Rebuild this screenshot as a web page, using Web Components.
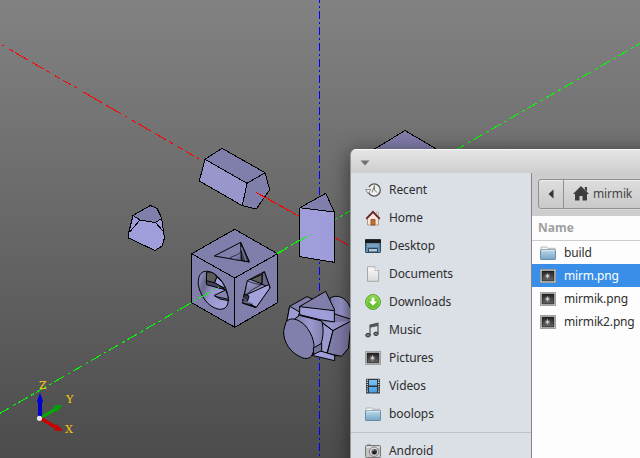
<!DOCTYPE html>
<html lang="en"><head><meta charset="utf-8"><title>CAD view</title>
<style>html,body{margin:0;width:640px;height:458px;overflow:hidden}</style></head>
<body>
<cad-workspace>
<model-view></model-view>
<file-dialog slot="dialog">
<place-item slot="places" icon="recent">Recent</place-item>
<place-item slot="places" icon="home">Home</place-item>
<place-item slot="places" icon="desktop">Desktop</place-item>
<place-item slot="places" icon="document">Documents</place-item>
<place-item slot="places" icon="download">Downloads</place-item>
<place-item slot="places" icon="music">Music</place-item>
<place-item slot="places" icon="picture">Pictures</place-item>
<place-item slot="places" icon="video">Videos</place-item>
<place-item slot="places" icon="folder">boolops</place-item>
<place-item slot="places" icon="device" separated>Android</place-item>
<path-bar slot="path">mirmik</path-bar>
<file-row icon="folder">build</file-row>
<file-row icon="picture" selected>mirm.png</file-row>
<file-row icon="picture">mirmik.png</file-row>
<file-row icon="picture">mirmik2.png</file-row>
</file-dialog>
</cad-workspace>
<script>
const define=(name,html,setup)=>customElements.define(name,class extends HTMLElement{
  static observedAttributes=['name','icon'];
  constructor(){super();this.attachShadow({mode:'open'}).innerHTML=html;}
  connectedCallback(){if(setup)setup(this,this.shadowRoot);}
  attributeChangedCallback(){if(this.isConnected&&setup)setup(this,this.shadowRoot);}
});

const icons={
recent:'<circle cx="9.2" cy="8" r="6.1" fill="#f0f0ed" stroke="#555" stroke-width="1.3"/><path d="M3.5 4.5A6.5 6.5 0 0 0 3.4 11" fill="none" stroke="#dededc" stroke-width="2.6"/><path d="M.5 7.5L3 11.3L6 7.5Z" fill="#f5f5f5" stroke="#777" stroke-width=".8"/><path d="M9.5 3.6L7 10.5M9.5 3.6V8L12 10.5" fill="none" stroke="#777" stroke-width="1"/>',
home:'<path d="M11.5 2H13.5V6H11.5Z" fill="#e8e0dc" stroke="#a79a96" stroke-width=".6"/><path d="M2.5 8L8 2.5L13.5 8V15H2.5Z" fill="#f4e6dc" stroke="#a89184" stroke-width=".9"/><path d="M1.2 8.8L8 1.8L14.8 8.8" fill="none" stroke="#6b2424" stroke-width="1.9"/><path d="M6 15V9.5H10V15Z" fill="#c9722b" stroke="#81441d" stroke-width=".8"/>',
desktop:'<rect x=".5" y="1.5" width="15" height="13" rx=".6" fill="url(#b)" stroke="#2c485c"/><path d="M0 1.5H16V5H0Z" fill="#17191b"/><path d="M2 5.5H14V9H2Z" fill="#8fb1cc" opacity=".65"/><path d="M3.5 10.5H12.5V14H3.5Z" fill="#b4c9d7" stroke="#27475f" stroke-width="1"/>',
document:'<path d="M2.5.8H10L13.6 4.5V15.3H2.5Z" fill="url(#w)" stroke="#a0a0a0" stroke-width=".9"/><path d="M10 1V4.5H13.5" fill="#fff" stroke="#aaa" stroke-width=".8"/>',
download:'<circle cx="8" cy="8" r="7.4" fill="url(#g)" stroke="#499c1d"/><circle cx="8" cy="8" r="6.4" fill="none" stroke="#a6e374" stroke-width=".7"/><path d="M6.6 3.8H9.4V7.4H12L8 11.8L4 7.4H6.6Z" fill="#fff"/>',
music:'<path d="M5 13V3.2L13 1.2V11.5" fill="none" stroke="#444" stroke-width="1.1"/><path d="M5 2.8L13 1V4L5 5.8Z" fill="#555"/><ellipse cx="3" cy="13.2" rx="2.3" ry="1.8" fill="#777" stroke="#333" stroke-width="1"/><ellipse cx="11" cy="11.8" rx="2.2" ry="1.7" fill="#777" stroke="#333" stroke-width="1"/>',
picture:'<rect x=".5" y="1.5" width="15" height="13" fill="#eee" stroke="#a0a0a0"/><rect x="2" y="3" width="12" height="10" fill="url(#k)" stroke="#171717" stroke-width=".7"/><path d="M7.5 5V11M4.8 8H10.2M5.5 6L9.5 10M9.5 6L5.5 10" stroke="#bbb" stroke-width=".7"/><circle cx="7.5" cy="8" r="1.2" fill="#ddd"/>',
video:'<rect x="1" y=".8" width="14" height="14.7" fill="#303436"/><path d="M4 2H12V7.5H4ZM4 9H12V14.5H4Z" fill="url(#v)"/><path d="M2.3 1.6V15M13.7 1.6V15" stroke="#eee" stroke-width="1.2" stroke-dasharray="1.1 1.1"/>',
folder:'<path d="M1 3.5V2H6.5L8 3.3H15V7H1Z" fill="#f7f7f5" stroke="#a5a6a4" stroke-width=".8"/><rect x=".5" y="4.8" width="15" height="9.7" rx=".6" fill="url(#f)" stroke="#567c96" stroke-width=".8"/><path d="M1.3 5.6H14.7" stroke="#d8eaf5"/>',
device:'<rect x=".5" y="2.5" width="15" height="12" rx="1" fill="#c4c5c3" stroke="#777"/><path d="M2 1.5H6V3H2Z" fill="#777"/><path d="M1.5 4.2H14.5" stroke="#eee"/><circle cx="9" cy="8.7" r="4.7" fill="#ddd" stroke="#777" stroke-width=".9"/><circle cx="9.3" cy="8.8" r="2.9" fill="#4a4859"/><circle cx="9.3" cy="9.4" r="1.5" fill="#1a1720"/><path d="M7.5 7.5L9 6.7" stroke="#bbb"/>',
path:'<path d="M8 0L16 8H14V14.5H9.5V10H6.5V14.5H2V8H0L8 0ZM11.8 1H14V5.5L11.8 3.3Z" fill="#3d3d3d"/>'
};
const lg=(id,a,b)=>`<linearGradient id="${id}" x2="0" y2="1"><stop stop-color="${a}"/><stop offset="1" stop-color="${b}"/></linearGradient>`;
define('ui-icon','<style>:host{display:block;width:16px;height:16px;flex:none}svg{display:block}</style><span></span>',(h,r)=>{
 r.querySelector('span').innerHTML=`<svg width="16" height="16" viewBox="0 0 16 16"><defs>${lg('b','#3e6786','#6d9abb')+lg('w','#fafafa','#dadada')+lg('g','#8ed44c','#59b523')+lg('k','#222','#666')+lg('v','#7cc3f7','#459ce8')+lg('f','#bcd8ea','#75a5c7')}</defs>${icons[h.getAttribute('name')]||''}</svg>`;
});
define('place-item',`<style>:host{display:flex;align-items:center;height:28px;padding-left:14px;gap:8px;font:12px/28px "Noto Sans",sans-serif;letter-spacing:-.08px;color:#2e2e2e;box-sizing:border-box}
:host([separated]){border-top:1px solid #bfc2c6;height:37px;margin-top:4px}</style><ui-icon></ui-icon><span><slot></slot></span>`,(h,r)=>r.querySelector('ui-icon').setAttribute('name',h.getAttribute('icon')));
define('file-row',`<style>:host{display:flex;align-items:center;height:23px;padding-left:8px;gap:8px;font:12px/23px "Noto Sans",sans-serif;letter-spacing:-.15px;color:#2e2e2e}
:host([selected]){background:#398ee7;color:#fff}</style><ui-icon></ui-icon><span><slot></slot></span>`,(h,r)=>r.querySelector('ui-icon').setAttribute('name',h.getAttribute('icon')));
define('path-bar',`<style>:host{display:flex;box-sizing:border-box;width:150px;height:30px;border:1px solid #909090;border-radius:3px;background:linear-gradient(#dedede,#c9c9c9);font:12px/28px "Noto Sans",sans-serif;letter-spacing:-.15px;color:#454545;box-shadow:inset 0 1px #ececec,0 1px #dadada}
.back{width:25px;border-right:1px solid #909090;display:grid;place-items:center;box-sizing:border-box}.here{display:flex;align-items:center;padding-left:9px;gap:4px}</style>
<div class="back"><svg width="6" height="10"><path d="M5.5 .5V9.5L.5 5Z" fill="#353535"/></svg></div><div class="here"><ui-icon name="path"></ui-icon><span><slot></slot></span></div>`);
define('file-dialog',`<style>:host{display:grid;grid-template-rows:24px 1fr;width:320px;height:340px;overflow:hidden;border-radius:6px 0 0 0;box-sizing:border-box;border-left:1px solid #979797;background:#cdcdcd}
.title{background:linear-gradient(#e5e5e5,#cecece);border-top:1px solid #f8f8f8;box-sizing:border-box;padding:10px 0 0 9px}.title svg{display:block}
.body{display:grid;grid-template-columns:180px 1fr;min-height:0}.places{background:#dbdfe6;padding-top:3px}
.files{border-left:1px solid #858585;background:#fdfdfd}.bar{height:43px;background:#cdcdcd;padding:6px 0 0 6px;box-sizing:border-box}
.head{height:25px;box-sizing:border-box;border-bottom:1px solid #ccc;padding-left:6px;font:bold 12px/24px "Noto Sans",sans-serif;color:#a0a0a0}</style>
<div class="title"><svg width="10" height="6"><path d="M.5 .5H9.5L5 5.5Z" fill="#727272"/></svg></div><div class="body"><div class="places"><slot name="places"></slot></div><div class="files"><div class="bar"><slot name="path"></slot></div><div class="head">Name</div><slot></slot></div></div>`);
define('cad-workspace',`<style>:host{display:block;position:relative;width:640px;height:458px;overflow:hidden}
.win{position:absolute;left:350px;top:149px;border-radius:6px 0 0 0;box-shadow:0 3px 20px rgba(0,0,0,.5)}</style><slot></slot><div class="win"><slot name="dialog"></slot></div>`);
define('model-view',`<style>:host{display:block;width:640px;height:458px;background:linear-gradient(#828282,#4c4c4c)}svg{display:block}text{font:11.4px "DejaVu Serif",serif;fill:#ffc80a}</style>
<svg width="640" height="458" viewBox="0 0 640 458">
<defs>
<linearGradient id="cyl"><stop stop-color="#7c7aa5"/><stop offset=".55" stop-color="#9b99d0"/><stop offset="1" stop-color="#8280ac"/></linearGradient>
<linearGradient id="bore" x2="1" y2=".5"><stop stop-color="#a3a1da"/><stop offset=".3" stop-color="#69678b"/><stop offset=".55" stop-color="#9694c8"/><stop offset="1" stop-color="#a5a3dc"/></linearGradient>
<linearGradient id="ball" x2=".6" y2="1"><stop stop-color="#a3a1da"/><stop offset="1" stop-color="#6a688e"/></linearGradient>
</defs>
<g shape-rendering="crispEdges" fill="none" stroke-width="1">
<path d="M319.5 0V3M319.5 6V8" stroke="#00f"/><path d="M319.5 11V458" stroke="#00f" stroke-dasharray="8 3 2 3"/>
<path d="M2 45L348 245" stroke="red" stroke-dasharray="2 6 5 2 15 5 13 3 4 6 6 4 9 3 3 7 22 5 18 4"/>
<path d="M0 413.3L640 43.5" stroke="#0f0" stroke-dasharray="11 4 3 3"/>
</g>
<g fill="#807eaa" stroke="#000" stroke-width="1" stroke-linejoin="round" shape-rendering="crispEdges">
<path d="M373 150L405 130.5L438 150Z"/>
<path d="M222 148.3L265 172.7L269.7 189.7L256.3 209L242.3 205.7L199.3 181L205 159.3Z"/><path d="M205 159.3L247 183.3L242.3 205.7L199.3 181Z" fill="#9896ca"/><path d="M247 183.3L265 172.7" fill="none"/>
<path d="M300 207.7L325.7 193.3L334.3 212Z"/><path d="M300 207.7L334.3 212V262.3L299.7 256.7Z" fill="#a09eda"/>
<path d="M133 215.5L150.5 205.5L157 208.5L160.5 215L162 221L164.500 238L162 246L155 250.500L128.500 238V233.500Z" fill="#a09eda"/>
<path d="M133 215.500L150.500 205.500L157 208.500L160.500 216L161.500 218.500L155.500 222.500L140 220Z"/>
<path d="M140 220L130 231.500M155.500 222.500L163 231" fill="none"/>
<path d="M234.700 229.300L277.500 253.700V302.700L234.700 327.300L191.700 302.700V253.700Z"/><path d="M191.700 253.700L234.700 278L277.500 253.700M234.700 278V327.300" fill="none"/>
</g>
<g transform="translate(180 220) scale(.3333333)" stroke="#000" stroke-width="3" stroke-linejoin="round" fill="#807eaa">
<path d="M103 108L182 67L208 126Z" fill="#817fab"/><path d="M152 112C170 105 178 102 184 94V122L154 117Z" fill="url(#ball)" stroke-width="2"/><path d="M182 67L208 126L184 121Z" fill="#3d3c50"/><path d="M184 82L198 122" fill="none" stroke="#77769b" stroke-width="4"/>
<path d="M71 155C98 147 132 180 142 220C151 256 137 272 113 267C84 260 60 227 55 194C54 175 58 160 71 155Z" fill="url(#bore)"/>
<path d="M80 157C94 153 107 162 110 172L102 190L79 187Z" fill="#5c5c5c"/><path d="M111 171Q130 185 137 205L103 190Z" fill="#a3a1da"/><path d="M79 182L108 190L136 209L116 204L80 194Z" fill="#46455c"/><path d="M103 226L137 210Q145 226 146 242L119 237Z" fill="#8583b2"/><path d="M104 229L145 238" fill="none"/>
<path d="M202 182L253 155L270 203L228 263L187 249Z" fill="#8b89b7"/><path d="M211 178L247 163L246 192Z" fill="#5c5c5c"/><path d="M247 162L253 155L270 203L246 193Z" fill="#68668a"/><path d="M202 183Q229 194 246 193Q217 205 193 229Z" fill="url(#ball)" stroke-width="2"/><path d="M193 227L266 194L270 204L228 263L206 252Z" fill="#a3a1da"/><path d="M193 222L207 228L202 246L228 262L187 249Z" fill="#39384a"/><path d="M189 233L207 250M188 245L219 251" fill="none" stroke="#77759b" stroke-width="3"/>
</g>
<g transform="translate(180 220) scale(.3333333)" stroke="#000" stroke-width="3" stroke-linejoin="round" fill="#807eaa">
<path d="M450 234C478 219 508 239 514 276V315L450 290Z" fill="url(#cyl)"/><path d="M329 259L381 230L400 238L370 300L320 307Z"/><path d="M329 259L359 276L352 297L320 307Z" fill="#9d9bd3"/><path d="M358 260L437 214L464 270L442 285Z"/>
<path d="M428 286L464 282L514 298L488 405L465 408L400 360Z"/><path d="M429 309L459 332L514 303M459 332L441 400L418 393L427 309Z" fill="#9b99d0"/><path d="M459 332L514 302L505 385L485 409L442 400Z"/>
<path d="M340 300L358 286L425 303C433 325 430 365 415 390L378 410Z" fill="url(#cyl)"/>
<path d="M318 306C332 290 353 296 374 315C399 342 410 382 396 405C391 416 377 419 362 411C333 399 309 367 311 332Z" fill="#817fab"/>
<path d="M359 260L463 272V306L421 299L359 284Z" fill="#a09eda"/><path d="M396 406L418 392L464 406V422Z" fill="#a09eda"/><path d="M400 384L425 370V392L401 403Z" fill="#747299"/>
</g>
<g fill="none" shape-rendering="crispEdges"><path d="M256 192.500L299 216" stroke="red" stroke-dasharray="11 5 8 4 13 6 5 2"/><path d="M180 309.300L218.500 287M277 254L311 234" stroke="#0f0" stroke-dasharray="13 3 3 3"/><path d="M319.500 187V195" stroke="#00f"/></g>
<g><path d="M40 418L57 408.500" stroke="#00b000" stroke-width="3"/><path d="M53 405.500L62.500 405L57 412Z" fill="#00a400"/><path d="M40 418L57 428" stroke="#c80000" stroke-width="3.500"/><path d="M57 424L63 431L54 430.500Z" fill="#c80000"/><path d="M40 418V401" stroke="#0000c8" stroke-width="4"/><path d="M36.800 402L40 392.500L43.200 402Z" fill="#0000d8"/><circle cx="39.500" cy="418.300" r="2.600" fill="#e5e5e5"/></g>
<g><text x="39" y="388.700" textLength="7.500" lengthAdjust="spacingAndGlyphs">Z</text><text x="66" y="402.700" textLength="7.500" lengthAdjust="spacingAndGlyphs">Y</text><text x="65" y="432.700" textLength="8" lengthAdjust="spacingAndGlyphs">X</text></g>
</svg>`);
</script>
</body></html>
